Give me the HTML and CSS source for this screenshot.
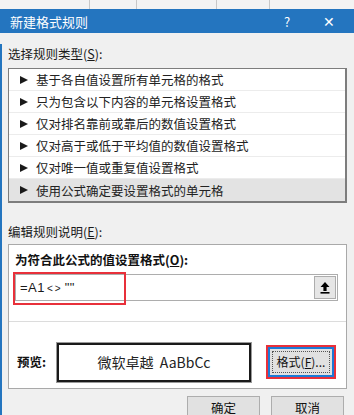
FILE: index.html
```html
<!DOCTYPE html>
<html lang="zh-CN">
<head>
    <meta charset="utf-8">
    <title>新建格式规则</title>
    <link rel="stylesheet" href="styles.css">
</head>
<body>
    <div class="sheet">
        <span class="col c1"></span>
        <span class="col c2"></span>
        <span class="col c3"></span>
        <span class="col c4"></span>
    </div>

    <div class="titlebar">
        <span class="title">新建格式规则</span>
        <span class="help">?</span>
        <span class="close">✕</span>
    </div>

    <div class="dialog">
        <div class="label first">选择规则类型(<u>S</u>):</div>

        <ul class="rules">
            <li><span class="tri"></span>基于各自值设置所有单元格的格式</li>
            <li><span class="tri"></span>只为包含以下内容的单元格设置格式</li>
            <li><span class="tri"></span>仅对排名靠前或靠后的数值设置格式</li>
            <li><span class="tri"></span>仅对高于或低于平均值的数值设置格式</li>
            <li><span class="tri"></span>仅对唯一值或重复值设置格式</li>
            <li class="selected"><span class="tri"></span>使用公式确定要设置格式的单元格</li>
        </ul>

        <div class="label second">编辑规则说明(<u>E</u>):</div>

        <div class="editbox">
            <div class="top">
                <div class="bold-label">为符合此公式的值设置格式(<u>O</u>):</div>
                <div class="formula">
                    <span class="value">=A1<span class="op">&lt;&gt;</span>""</span>
                    <span class="pick">
                        <svg width="12" height="13" viewBox="0 0 12 13">
                            <path d="M6 1 L10.5 6 H7.6 V10 H4.4 V6 H1.5 Z" fill="#000"/>
                            <rect x="1.5" y="11" width="9" height="1.6" fill="#000"/>
                        </svg>
                    </span>
                    <span class="mark mark-formula"></span>
                </div>
            </div>
            <div class="bottom">
                <span class="bold-label">预览:</span>
                <div class="preview">微软卓越&nbsp; AaBbCc</div>
                <div class="fmt-wrap">
                    <button class="fmt"><span class="focus">格式(<u>F</u>)...</span></button>
                </div>
            </div>
        </div>

        <div class="actions">
            <button class="btn">确定</button>
            <button class="btn">取消</button>
        </div>
    </div>
</body>
</html>
```

FILE: styles.css
```css
* {
    margin: 0;
    padding: 0;
    box-sizing: border-box;
}

body {
    width: 354px;
    height: 415px;
    overflow: hidden;
    background: #f0f0f0;
    font-family: "Noto Sans CJK SC", "Noto Sans", sans-serif;
    font-size: 12px;
    color: #1a1a1a;
}

.sheet {
    height: 9px;
    display: flex;
    background: #f3f3f3;
}

.col {
    border-right: 1px solid #c8c8c8;
}

.c1 { width: 90px; }
.c2 { width: 47px; }
.c3 { width: 80px; }
.c4 { width: 53px; }

.titlebar {
    height: 24px;
    background: #2475bf;
    color: #fff;
    display: flex;
    align-items: center;
    padding-left: 10px;
}

.title {
    flex: 1;
    font-size: 13px;
}

.help {
    width: 30px;
    font-size: 13px;
    margin-right: 12px;
    text-align: center;
}

.close {
    width: 30px;
    margin-right: 10px;
    text-align: center;
    font-size: 14px;
}

.dialog {
    height: 382px;
    border-left: 2px solid #2475bf;
    padding: 0 7px 0 6px;
}

.label {
    height: 20px;
    line-height: 20px;
    font-size: 12.5px;
}

.label.first {
    margin-top: 11px;
    margin-bottom: 4px;
}

.label.second {
    margin-top: 19px;
    margin-bottom: 2px;
}

.rules {
    list-style: none;
    background: #fff;
    border: 2px solid #7d7d7d;
    border-top-width: 1px;
    border-left-width: 1px;
}

.rules li {
    height: 22px;
    line-height: 21px;
    padding-left: 11px;
    border-bottom: 1px solid #ececec;
    font-size: 12.5px;
    color: #222;
    white-space: nowrap;
    display: flex;
    align-items: center;
}

.rules li:last-child {
    border-bottom: none;
}

.rules li.selected {
    background: #e3e3e3;
}

.tri {
    width: 0;
    height: 0;
    border-top: 4px solid transparent;
    border-bottom: 4px solid transparent;
    border-left: 8px solid #1a1a1a;
    margin-right: 8px;
}

.editbox {
    background: #fff;
    border: 1px solid #a9a9a9;
    height: 145px;
    display: flex;
    flex-direction: column;
}

.top {
    padding: 6px 8px 0 6px;
    height: 77px;
    border-bottom: 1px solid #dcdcdc;
}

.bold-label {
    font-weight: bold;
    font-size: 12.5px;
    line-height: 18px;
    color: #111;
}

.formula {
    position: relative;
    margin-top: 5px;
    height: 27px;
    border: 1px solid #adadad;
    display: flex;
    align-items: center;
    justify-content: space-between;
    padding-left: 4px;
    padding-right: 1px;
}

.value {
    font-family: "Liberation Sans", sans-serif;
    font-size: 13px;
    letter-spacing: 0.5px;
}

.op {
    font-size: 10px;
    letter-spacing: 2px;
    margin: 0 2px;
}

.pick {
    width: 22px;
    height: 23px;
    background: #e6e6e6;
    border: 1px solid #adadad;
    display: flex;
    align-items: center;
    justify-content: center;
}

.mark {
    position: absolute;
    border: 2px solid #e8303a;
}

.mark-formula {
    left: -3px;
    top: -3px;
    width: 113px;
    height: 33px;
}

.bottom {
    flex: 1;
    display: flex;
    align-items: center;
    padding: 14px 8px 0 8px;
}

.bottom .bold-label {
    width: 40px;
}

.preview {
    width: 194px;
    height: 39px;
    border: 2px solid #1a1a1a;
    outline: 1px solid #9a9a9a;
    display: flex;
    align-items: center;
    justify-content: center;
    font-size: 14px;
    color: #222;
}

.fmt-wrap {
    margin-left: 15px;
    border: 2px solid #e8303a;
    width: 70px;
    height: 34px;
    display: flex;
}

.fmt {
    flex: 1;
    background: #e1e1e1;
    border: 2px solid #1c7ad6;
    font-family: inherit;
    font-size: 12px;
    color: #111;
    display: flex;
    align-items: center;
    justify-content: center;
}

.focus {
    border: 1px dotted #555;
    padding: 2px 4px;
    line-height: 16px;
}

.actions {
    display: flex;
    justify-content: flex-end;
    gap: 11px;
    margin-top: 7px;
    padding-right: 3px;
}

.btn {
    width: 73px;
    height: 20px;
    padding-top: 1px;
    line-height: 17px;
    background: #e1e1e1;
    border: 1px solid #adadad;
    border-bottom: none;
    font-family: inherit;
    font-size: 12.5px;
    color: #111;
}
```
